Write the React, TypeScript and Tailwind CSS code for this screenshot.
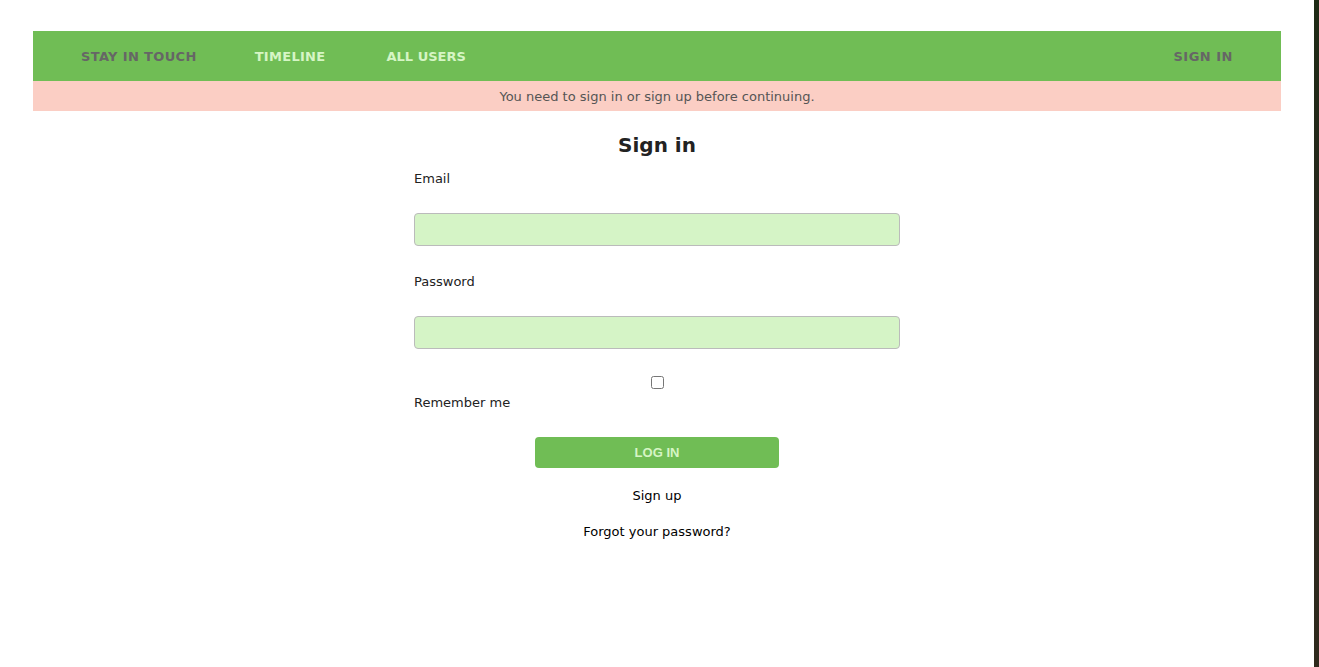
export default function App() {
  return (
    <div className="flex h-[667px] w-full overflow-hidden bg-white" style={{ fontFamily: '"DejaVu Sans", Verdana, sans-serif' }}>
      <div className="w-[1314px] shrink-0 bg-white pt-[31px] px-[33px]">
        {/* Navbar */}
        <nav className="flex h-[50px] items-center bg-[#70bd55] pt-[2px] text-[13px] font-bold uppercase">
          <a className="ml-[48px] tracking-[0.35px] text-[#666666]">Stay in touch</a>
          <a className="ml-[58px] tracking-[0.3px] text-[#d6f5c5]">Timeline</a>
          <a className="ml-[61px] text-[#d6f5c5]">All users</a>
          <a className="ml-auto mr-[48px] tracking-[0.5px] text-[#666666]">Sign in</a>
        </nav>

        {/* Flash */}
        <div className="flex h-[30px] items-center justify-center bg-[#fbcec4] pt-[1px] text-[13px] text-[#555555]">
          You need to sign in or sign up before continuing.
        </div>

        {/* Form */}
        <div className="mx-auto w-[486px]">
          <h2 className="mt-[22px] text-center text-[20px] leading-[24px] font-bold text-[#222222]">Sign in</h2>

          <label className="mt-[14px] block text-[13px] leading-4 text-[#222222]">Email</label>
          <input
            type="email"
            className="mt-[26px] block h-[33px] w-full rounded border border-[#bbbbbb] bg-[#d5f4c6]"
          />

          <label className="mt-[28px] block text-[13px] leading-4 text-[#222222]">Password</label>
          <input
            type="password"
            className="mt-[26px] block h-[33px] w-full rounded border border-[#bbbbbb] bg-[#d5f4c6]"
          />

          <div className="mt-[27px] flex justify-center">
            <input type="checkbox" className="m-0 h-[13px] w-[13px]" />
          </div>
          <label className="mt-[6px] block text-[13px] leading-4 text-[#222222]">Remember me</label>

          <div className="mt-[26px] flex justify-center">
            <button
              className="h-[31px] w-[244px] rounded bg-[#70bd55] text-[13px] font-bold text-[#d6f5c5]"
              style={{ fontFamily: '"Liberation Sans", Arial, sans-serif' }}
            >
              LOG IN
            </button>
          </div>

          <div className="mt-[20px] text-center text-[13px] leading-4 text-black">
            <a>Sign up</a>
          </div>
          <div className="mt-[20px] text-center text-[13px] leading-4 text-black">
            <a>Forgot your password?</a>
          </div>
        </div>
      </div>
      <div className="flex-1 bg-gradient-to-b from-[#1d2a14] via-[#2a2620] to-[#2e2a1c]" />
    </div>
  );
}
